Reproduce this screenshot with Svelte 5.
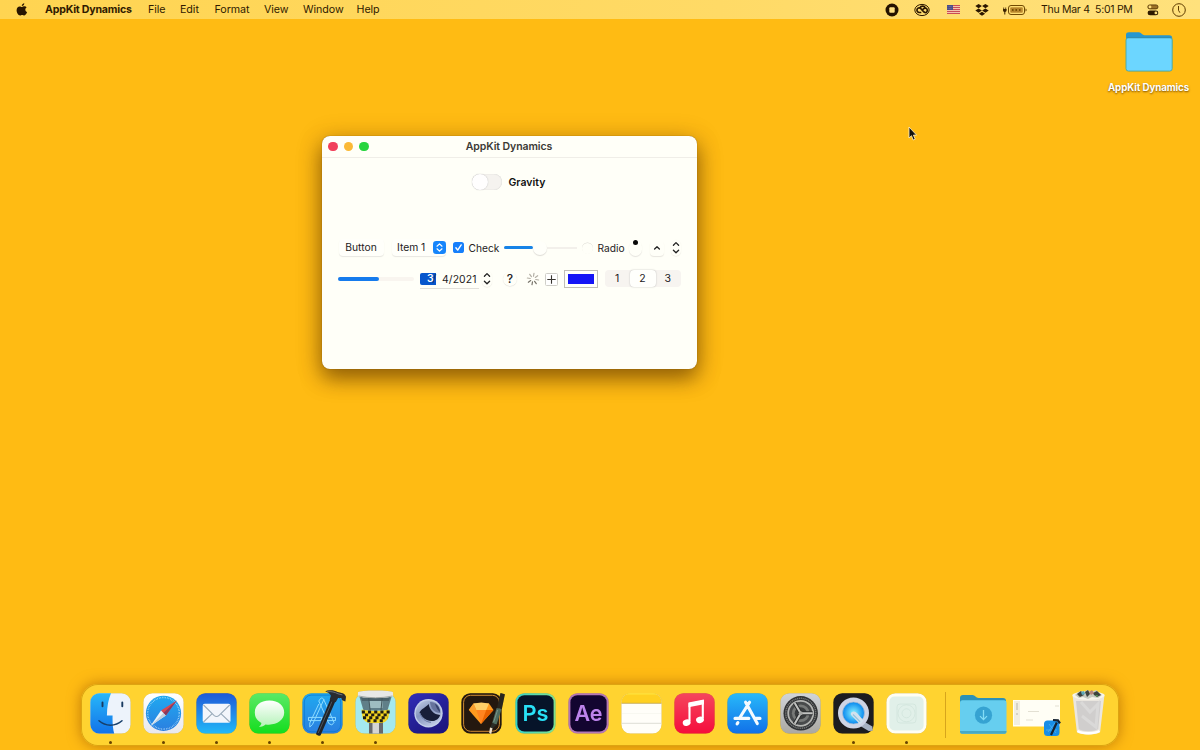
<script>
  const menus = [
    ['File', 148], ['Edit', 180], ['Format', 214.5], ['View', 264], ['Window', 303], ['Help', 356.5]
  ];
  const widths = menus.map(([, x], i) => (i < menus.length - 1 ? menus[i + 1][1] - x : 40));
  const segments = [1, 2, 3];
  const rays = [0, 45, 90, 135, 180, 225, 270, 315];
  const keys = ['finder', 'safari', 'mail', 'messages', 'xcode', 'tower', 'cinema', 'sketch', 'ps', 'ae', 'notes', 'music', 'store', 'settings', 'quicktime', 'blank'];
  const running = ['finder', 'safari', 'mail', 'messages', 'xcode', 'tower', 'quicktime', 'blank'];
</script>

{#snippet body(fill)}
  <rect x="6.4" y="9.2" width="40.2" height="40.4" rx="9" {fill} />
{/snippet}

{#snippet stepper()}
  <svg class="stepper" width="10" height="16" viewBox="0 0 10 16">
    <path d="M2.4 5.2 5 2.6l2.6 2.6M2.4 10.2 5 12.8l2.6-2.6" fill="none" stroke="#222" stroke-width="1.3" stroke-linecap="round" stroke-linejoin="round" />
  </svg>
{/snippet}

{#snippet hammer()}
  <path d="M34.700 14.500 39.700 16.500 24.600 51.200c-.8 1.200-5 0-4.500-1.600z" fill="#20242a" />
  <path d="M36 17.500 22.200 49" stroke="#59616b" stroke-width=".8" />
  <path d="M29.200 7.200c4.200-1.500 9.300-.8 12.300.8l5.200 1.200c1.200.4 2.900 2 3.300 3.500l-.7 4.900-3.400-1.500-.5-2.200-3.300.1-2.400 4.200-6-2.400 1.200-4.200c-1-2.200-3-3.300-5.700-4.400z" fill="#282c31" />
  <path d="M31 7.800c4.200-.7 8 .4 11 2l4.400 1.100" stroke="#747a80" stroke-width=".9" fill="none" />
{/snippet}

<div class="desktop">
  <header>
    <svg class="apple" width="12" height="13" viewBox="0 0 12 13"><path d="M8.300.3c.1 1.500-1.100 2.800-2.500 2.800C5.600 1.700 6.900.4 8.300.3M10.600 4.400c-2 1.200-1.500 3.800.5 4.600-.5 1.500-1.600 3.400-2.800 3.400-.8 0-1.100-.5-2.100-.5s-1.400.5-2.100.5C2.300 12.400.6 9.500.6 7.200c0-2.400 1.400-3.800 3.100-3.800.9 0 1.700.6 2.300.6.6 0 1.500-.7 2.600-.7.9 0 1.600.4 2 1.100" fill="#281500" /></svg>
    <b>AppKit Dynamics</b>
    <nav>
      {#each menus as [name], i}<span style="width:{widths[i]}px">{name}</span>{/each}
    </nav>
    <div class="status">
      <svg width="14" height="14" viewBox="0 0 14 14"><circle cx="7" cy="7" r="6.500" fill="#251300" /><rect x="4.300" y="4.300" width="5.400" height="5.400" rx="1" fill="#ffe283" /></svg>
      <svg class="cc" width="16" height="14" viewBox="0 0 16 14"><g fill="none" stroke="#2d1800"><ellipse cx="8" cy="7" rx="7.200" ry="5.600" stroke-width="1" /><path d="M7.300 9.500H5.200a2.300 2.300 0 1 1 1.200-4.300l3.600 3.900c2.500 1.400 4.400-1.500 2.700-3.400-1.200-1.200-2.800-.6-4.200 1M6 4.900c.8-2.300 4.400-2.500 5.300.1" stroke-width="1.700" /></g></svg>
      <svg class="flag" width="13" height="9" viewBox="0 0 13 9"><path fill="#f3c3ac" d="M0 0h13v9H0z" /><path stroke="#c5404c" d="M0 .5h13M0 2.500h13M0 4.500h13M0 6.500h13M0 8.500h13" stroke-width=".9" /><path fill="#4a4c88" d="M0 0h6v5H0z" /><path stroke="#a9a0b8" stroke-width=".5" stroke-dasharray=".6 .7" d="M.7 1.500h5M.7 3.500h5" /></svg>
      <svg class="dropbox" width="14" height="12" viewBox="0 0 14 12"><path fill="#2b1600" d="m3.600 0 3.300 2.100-3.300 2.100L.3 2.100zm6.800 0 3.300 2.100-3.300 2.100-3.300-2.100zM3.600 4.500l3.300 2.100-3.300 2.100L.3 6.600zm6.800 0 3.300 2.100-3.300 2.100-3.300-2.100zM7 7.700l3.100 2L7 11.700l-3.100-2z" /></svg>
      <svg class="battery" width="24" height="10" viewBox="0 0 24 10"><g fill="none" stroke="#704900"><rect x="5.500" y=".5" width="16" height="9" rx="2.500" /><rect x="7.200" y="2.300" width="12.600" height="5.400" rx="1" fill="#bd8b30" stroke="none" /><path d="m9 3.800 1.500 2.400m0-2.400L9 6.200m3.500-2.400L14 6.200m0-2.400-1.500 2.400M16 3.800l1.500 2.400m0-2.400L16 6.200" stroke-width=".9" /></g><path d="M22.500 3.500c1.500.4 1.500 2.600 0 3z" fill="#704900" /><path d="M.7 2.500v2M2.700 2.500v2" stroke="#3b2200" stroke-width=".8" /><path d="M0 4h3.600v1.300C3.600 6.400 2.700 7 2.300 7v2.500h-1V7C.7 7 0 6.400 0 5.300z" fill="#3b2200" /></svg>
      <time>Thu Mar 4&nbsp; 5:01 PM</time>
      <svg class="control" width="12" height="12" viewBox="0 0 12 12"><rect x=".8" y=".9" width="10.200" height="4" rx="2" fill="#9c7126" stroke="#4d3000" stroke-width=".8" /><circle cx="3" cy="2.900" r="1.400" fill="#ffe17d" /><rect x=".6" y="6.500" width="10.700" height="4.800" rx="2.400" fill="#2e1a00" /><circle cx="8.900" cy="8.900" r="1.400" fill="#ffe17d" /></svg>
      <svg class="clock" width="14" height="14" viewBox="0 0 14 14"><circle cx="7" cy="7" r="6.300" fill="none" stroke="#5e3b00" /><path d="M6.500 3v4.300l1.400 2.400" fill="none" stroke="#5e3b00" /></svg>
    </div>
  </header>

  <div class="shortcut">
    <svg width="50" height="42" viewBox="0 0 50 42"><path d="M2 4c0-2 1.100-2.700 3-2.700h10c2 0 3.300 3 5.500 3h24.700c2 0 3 1.200 3 3v10H2z" fill="#2797cf" /><rect x="2" y="6.500" width="46.200" height="33.600" rx="2.500" fill="#6cd6ff" stroke="#4aa79f" stroke-width=".9" /><path d="M3 6.600h44" stroke="#338eaf" stroke-width="1.100" /></svg>
    <span>AppKit Dynamics</span>
  </div>

  <svg class="cursor" width="9" height="15" viewBox="0 0 9 15"><path d="M1 1v11l2.500-2.300L5.200 14l2-.9-1.800-4H8.600z" fill="#12100c" stroke="#fff1cd" stroke-width=".8" /></svg>

  <main>
    <div class="titlebar">
      <i class="red"></i><i class="amber"></i><i class="green"></i>
      <h1>AppKit Dynamics</h1>
    </div>
    <div class="gravity"><span class="switch"><i></i></span><b>Gravity</b></div>
    <div class="row first">
      <span class="button">Button</span>
      <span class="popup">Item 1<svg width="13" height="13" viewBox="0 0 12 12"><rect width="12" height="12" rx="3" fill="#1685fb" /><path d="M3.700 4.800 6 2.600l2.300 2.200M3.700 7.200 6 9.400l2.300-2.200" fill="none" stroke="#fff" stroke-width="1.100" stroke-linecap="round" stroke-linejoin="round" /></svg></span>
      <svg class="check" width="11" height="11" viewBox="0 0 11 11"><rect width="11" height="11" rx="2.600" fill="#167ffb" /><path d="m2.900 5.800 1.800 2.300 3.500-5.200" fill="none" stroke="#fff" stroke-width="1.400" stroke-linecap="round" stroke-linejoin="round" /></svg>
      <span class="check-label">Check</span>
      <span class="slider"><b></b><i></i></span>
      <i class="radio"></i><span class="radio-label">Radio</span>
      <span class="dial"><i></i></span>
      <span class="disclosure"><svg width="8" height="6" viewBox="0 0 8 6"><path d="m1.600 4 2.400-2.300L6.400 4" fill="none" stroke="#222" stroke-width="1.300" stroke-linecap="round" stroke-linejoin="round" /></svg></span>
      {@render stepper()}
    </div>
    <div class="row second">
      <span class="progress"><i></i></span>
      <span class="date"><b>3</b><em>/</em><span>4/2021</span></span>
      {@render stepper()}
      <span class="help">?</span>
      <svg class="spinner" width="14" height="14" viewBox="0 0 14 14">
        {#each rays as angle, i}<path d="M7 1.300v2.900" stroke={i > 2 && i < 6 ? '#77736a' : '#b3afa5'} stroke-width="1.200" stroke-linecap="round" transform="rotate({angle + 10} 7 7)" />{/each}
      </svg>
      <svg class="plus" width="13" height="13" viewBox="0 0 13 13"><rect x=".5" y=".5" width="12" height="12" rx="1" fill="#fff" stroke="#d0cfc9" /><path d="M2.300 6.500h8.400M6.500 2.300v8.400" stroke="#38352f" stroke-width="1.100" /></svg>
      <span class="well"><i></i></span>
      <span class="segments">{#each segments as n}<span class:active={n === 2}>{n}</span>{/each}</span>
    </div>
  </main>

  <footer>
    <svg width="0" height="0" class="defs"><defs>
      <linearGradient id="blue" x2="0" y2="1"><stop stop-color="#28b9fa" /><stop offset="1" stop-color="#1170e8" /></linearGradient>
      <linearGradient id="sea" x2="0" y2="1"><stop stop-color="#1fa9f0" /><stop offset="1" stop-color="#2b7fe0" /></linearGradient>
      <linearGradient id="mail" x2="0" y2="1"><stop stop-color="#1e59d8" /><stop offset="1" stop-color="#22b9f8" /></linearGradient>
      <linearGradient id="green" x2="0" y2="1"><stop stop-color="#5be966" /><stop offset="1" stop-color="#14dd1e" /></linearGradient>
      <linearGradient id="bubble" x2="0" y2="1"><stop stop-color="#fff" /><stop offset="1" stop-color="#b4f3b8" /></linearGradient>
      <linearGradient id="silver" x2="0" y2="1"><stop stop-color="#d0d4d8" /><stop offset="1" stop-color="#aaa8a2" /></linearGradient>
      <linearGradient id="pink" x2="0" y2="1"><stop stop-color="#f5465d" /><stop offset="1" stop-color="#f50d3c" /></linearGradient>
      <linearGradient id="white" x2="0" y2="1"><stop stop-color="#fff" /><stop offset="1" stop-color="#e8e8ed" /></linearGradient>
      <linearGradient id="adobe"><stop stop-color="#35d3c8" /><stop offset="1" stop-color="#80e18d" /></linearGradient>
      <linearGradient id="violet" x2=".6" y2="1"><stop stop-color="#302db8" /><stop offset="1" stop-color="#1d1680" /></linearGradient>
      <linearGradient id="ball" x2=".6" y2="1"><stop stop-color="#c5d2e8" /><stop offset=".5" stop-color="#8595be" /><stop offset="1" stop-color="#bcc8e3" /></linearGradient>
      <radialGradient id="qt"><stop stop-color="#89f3ff" /><stop offset="1" stop-color="#0787ef" /></radialGradient>
      <clipPath id="tile"><rect x="6.400" y="9.200" width="40.200" height="40.400" rx="9" /></clipPath>
    </defs></svg>
    <div class="apps">
      {#each keys as key}
        <div class="app">
          <svg width="53.130" height="54" viewBox="0 0 53.130 54" class="art">
            {#if key === 'finder'}
              {@render body('#edf3fb')}
              <path clip-path="url(#tile)" d="M5 8h22.500c-3 7-4.400 14-4.600 23.500h5.700c-.2 7 .1 12.500 1.900 19.500H5z" fill="url(#blue)" />
              <path d="M18.500 18.500v3.700M38.300 18.500v3.700" stroke="#193a60" stroke-width="1.900" stroke-linecap="round" /><path d="M15 36.800c6.500 5.800 16.500 5.800 23 0" fill="none" stroke="#173f6b" stroke-width="1.500" stroke-linecap="round" />
            {:else if key === 'safari'}
              {@render body('url(#white)')}
              <circle cx="26.500" cy="29.300" r="17.600" fill="url(#sea)" /><circle cx="26.500" cy="29.300" r="15.800" fill="none" stroke="#c5e8fb" stroke-width="1.400" stroke-dasharray=".55 1.100" />
              <path d="M39.800 16.500 24 26.600l4.800 4.900z" fill="#d9484f" /><path d="M13.500 42.100 24 26.600l4.800 4.900z" fill="#edf4fa" /><path d="m39.800 16.500-11 15-2.400-2.400z" fill="#873b60" /><path d="m13.500 42.100 15.300-10.600-2.400-2.400z" fill="#bed0df" />
            {:else if key === 'mail'}
              {@render body('url(#mail)')}
              <rect x="12.700" y="19.800" width="27.800" height="19" rx="2" fill="#f3f6fb" /><path d="m13.500 21 10.500 10.300c1.600 1.500 3.500 1.500 5.100 0L39.700 21M13.500 38l8.700-8.400M39.700 38l-8.800-8.400" fill="none" stroke="#9aabba" stroke-width="1.100" />
            {:else if key === 'messages'}
              {@render body('url(#green)')}
              <path d="M26.500 16.500c-9.500 0-14.700 5.200-14.700 12.100 0 5 2.700 8.400 6.600 10.300-.2 1.800-1.200 2.800-2.500 3.900 3 0 5-1 6.600-2.400 9.700 1.500 18.700-3.400 18.700-11.800 0-7-5.600-12.100-14.700-12.100" fill="url(#bubble)" />
            {:else if key === 'xcode'}
              {@render body('url(#sea)')}<rect x="8.300" y="11.100" width="36.400" height="36.600" rx="7" fill="none" stroke="#0b78d1" stroke-width=".8" />
              <g fill="none" stroke="#8edbff" stroke-width="1"><path d="M24.500 14.500c1-.8 2.200-.6 3 .5L38 38.500l-2.200 2.500-3-1.500-10-22.500z" /><path d="M28 15.200 16.500 40.500 13.800 43v-4l9-19M12.500 33.400h13.700l-1.400 3.200H12.500zM30 33.400h9.500v3.200h-8.300z" /></g>{@render hammer()}
            {:else if key === 'tower'}
              {@render body('#a4e9ef')}
              <path clip-path="url(#tile)" d="M20 34h14v18H20z" fill="#68696c" /><path clip-path="url(#tile)" d="M23.500 37h6.500v14h-6.500z" fill="#d5d5d4" />
              <path d="M10.500 13h32l-4 13.500H14.500z" fill="#607f88" /><path d="M19.500 14h14v10h-12.500z" fill="#9ebdc1" /><path d="M12 13.500h29l-1 3.500H13z" fill="#4b626a" /><path d="M19.600 13l1.500 13M33.300 13l-1.300 13" stroke="#42565c" />
              <path d="M9 8.200c0-2.400 35-2.400 35 0l.2 3.500c-1 3-34.400 3-35.400 0z" fill="#e7e8e7" /><path d="M9.500 12q17 3.500 34 0" fill="none" stroke="#a2a8a7" />
              <path d="M12.500 25.500q14 3 28 0l-1 8q-2.500 5-7 5.500H21q-5-.5-7.500-5.500z" fill="#f3d521" />
              <g stroke="#211d12" stroke-width="2.900" stroke-dasharray="3.100 3.100"><path d="M12.800 28h28" /><path d="M16 30.900h24" /><path d="M14 33.800h25" /><path d="M18.300 36.700h17" /></g>
            {:else if key === 'cinema'}
              {@render body('url(#violet)')}
              <circle cx="26.500" cy="29.300" r="14.200" fill="#c3cfea" /><circle cx="26.500" cy="29.300" r="12.800" fill="url(#ball)" />
              <path d="M17.500 28.500c2-3.800 6-5 9.200-8.500.9 6.200 5.100 10.400 11.400 11-.8 3.600-4.400 6.200-8.600 6.100-5.600-.2-9.500-4-12-8.600" fill="#171e38" />
              <path d="M28 18c5.300-.3 10 4.500 10.200 11-5.500-.1-9.600-4.200-10.200-11" fill="#66739c" /><path d="M33 19.500c3 1.600 4.900 4.700 5.200 8.700-2.200-1.600-4-4.200-5.200-8.700" fill="#35426c" />
              <path d="M18 29c1.500 5.300 5.500 9 11 9.300" fill="none" stroke="#65749f" stroke-width="1" />
            {:else if key === 'sketch'}
              {@render body('#24180f')}<rect x="8.600" y="11.300" width="35.800" height="36" rx="7" fill="none" stroke="#d08c32" />
              <path d="M18.500 19.500h15.500l4.500 6.500-12.500 14-12.200-14z" fill="#ff9a1e" /><path d="m18.500 19.500 7.800-1 7.700 1-2.800 6.500H21.300z" fill="#ffcf68" /><path d="m13.800 26 4.700-6.500 2.800 6.500z" fill="#f99f31" /><path d="M21.300 26h9.900L26 40z" fill="#ff8420" /><path d="M31.200 26h7.300L26 40z" fill="#e96200" />
              <path d="m45.500 9 4.400 1.200-3.100 15-4.900-1z" fill="#28251e" /><path d="m41.600 24 5 1-5 15.500-4.500-1.300z" fill="#4e6c60" /><path d="m42.600 26-3.900 12" stroke="#7b9488" fill="none" /><path d="m37 39 4.500 1.500-4.300 4.500-2-1z" fill="#2b2d28" /><path d="m35 43.500 2.500.8-1.300 6-2-1.500z" fill="#eee1cc" />
            {:else if key === 'ps' || key === 'ae'}
              {@render body(key === 'ps' ? 'url(#adobe)' : '#b477b6')}
              <rect x="8.400" y="11.200" width="36.200" height="36.400" rx="7" fill={key === 'ps' ? '#061429' : '#130530'} /><text x="26.500" y="37" text-anchor="middle" font-size="22" font-weight="600" textLength={key === 'ps' ? 26 : 28} lengthAdjust="spacingAndGlyphs" fill={key === 'ps' ? '#28e0f6' : '#bd83eb'}>{key === 'ps' ? 'Ps' : 'Ae'}</text>
            {:else if key === 'notes'}
              {@render body('#fffef9')}<path clip-path="url(#tile)" d="M5 8h43v11H5z" fill="#ffd021" /><path d="M12 10h29" stroke="#ffdf35" stroke-width="1.500" /><path d="M6.500 19.300h40" stroke="#c5a74a" stroke-width=".9" /><path d="M7 29.500h39" stroke="#f5f4ed" stroke-width=".7" /><path d="M7 39.300h39" stroke="#deddd5" />
            {:else if key === 'music'}
              {@render body('url(#pink)')}
              <path d="M21.500 37V20l13.300-2.800v17" fill="none" stroke="#fff" stroke-width="2.100" /><path d="m20.500 18.500 15.400-3v4.800l-15.400 3z" fill="#fff" /><ellipse cx="18.700" cy="38.600" rx="4" ry="3.200" fill="#fff" transform="rotate(-15 18.700 38.600)" /><ellipse cx="32" cy="35.800" rx="4" ry="3.200" fill="#fff" transform="rotate(-15 32 35.800)" />
            {:else if key === 'store'}
              {@render body('url(#blue)')}
              <g stroke="#f4faff" stroke-width="3.100" stroke-linecap="round"><path d="m24.600 18.200 11.700 21.400M28.600 18.200 18.300 34.500M14 34.400h13.800M33.500 34.400H39M16.900 38.600l-.8 1.300" /></g>
            {:else if key === 'settings'}
              {@render body('url(#silver)')}
              <circle cx="26.700" cy="29.300" r="17.200" fill="#303234" /><circle cx="26.700" cy="29.300" r="15" fill="none" stroke="#747675" stroke-width="1.500" stroke-dasharray="1.200 .7" /><circle cx="26.700" cy="29.300" r="12.500" fill="#484a4b" stroke="#b4b5b2" stroke-width="1.800" /><circle cx="26.700" cy="29.300" r="8.800" fill="#777977" /><circle cx="26.700" cy="29.300" r="6" fill="#3a3c3d" /><path d="M26.700 29.300h12M26.700 29.300l-6-10.400M26.700 29.300l-6 10.400" stroke="#292b2c" stroke-width="4" /><path d="M26.700 29.300h12M26.700 29.300l-6-10.400M26.700 29.300l-6 10.400" stroke="#c2c3c1" stroke-width="2" /><circle cx="26.700" cy="29.300" r="2" fill="#a4a5a3" />
            {:else if key === 'quicktime'}
              {@render body('#1c1c20')}
              <path d="m36 37 9.400 5.500.3 4.200-4 .3-8-4.800z" fill="#a5b0c1" /><circle cx="26.500" cy="29" r="15.500" fill="#ced4e5" /><circle cx="26.500" cy="29" r="11" fill="url(#qt)" stroke="#b3bfd2" stroke-width=".7" /><path d="M24.600 28.300c2-1.700 4.200-.8 5.700 1l6.400 7.500-3.700 3.500-8.500-8.700c-1-1.100-1-2.200.1-3.300" fill="#d1e1ed" /><path d="m26 30.500 7 7.200" stroke="#8ec4de" stroke-width="1.200" />
            {:else}
              {@render body('#fffef3')}<rect x="9.400" y="12.500" width="34.200" height="34" rx="5" fill="#e1f0e9" /><g fill="none" stroke="#d0e4dc" stroke-width=".8"><circle cx="26.500" cy="29.300" r="8.500" /><circle cx="26.500" cy="29.300" r="4.500" /><rect x="17" y="20" width="19" height="19" rx="3" /></g>
            {/if}
          </svg>
          {#if running.includes(key)}<i class="dot"></i>{/if}
        </div>
      {/each}
    </div>
    <i class="separator"></i>
    <svg class="shelf" width="160" height="54" viewBox="0 0 160 54">
      <path d="M3 14c0-2 1-3 3-3h9.500c2.500 0 3.500 3 6 3H46c2 0 3 1 3 3v9H3z" fill="#2c91b6" /><rect x="3" y="16.200" width="46.500" height="33.500" rx="2.500" fill="#66ceef" /><path d="M3 47v.5c0 1.500 1 2.300 2.500 2.300H47c1.500 0 2.500-.8 2.500-2.300V47z" fill="#48a9c4" /><circle cx="26.500" cy="31.200" r="8.600" fill="#36a3d2" /><path d="M26.500 26v9.500m-3.500-3.400 3.500 3.500 3.500-3.500" fill="none" stroke="#84ddf5" stroke-width="1.300" />
      <path d="M56 16h47v26.500H56z" fill="#fffef5" /><path d="M57 17h6v24h-6z" fill="#f1eee1" /><path d="M59 19h2v7h-2zM59 29h2v2h-2z" fill="#d5d2c5" /><path d="M71 27.500h11M69 36h7M98 22h4" stroke="#e3e0d3" />
      <rect x="87" y="36.500" width="15.500" height="15.500" rx="3.500" fill="#178ee7" /><path d="m91 48 7-9M92 40l7 9M89 46h11" stroke="#55b5f0" stroke-width=".7" /><path d="m94 51 5.800-12.500M96 36l5 .4 2 3" stroke="#172331" stroke-width="2.200" fill="none" />
      <path d="m115.500 10.500 4.300 37c.4 4 23 4 23.400 0l4.300-37z" fill="#eae6df" /><path d="m119 17 2.800 28c4 3 15.500 3 19.400 0L144 17z" fill="#d0cecd" /><path d="m124 18 9 10 8-8-2 23-14-11" fill="none" stroke="#dad9d8" stroke-width="3" /><path d="M120.500 47c5 3 16.500 3 22 0" stroke="#fff" fill="none" stroke-width="2.500" />
      <ellipse cx="131.500" cy="11.500" rx="16" ry="4.200" fill="#f7f5ec" /><path d="m118 11 5-4 4 1 3-2 5 2 4-2 6 5-4 3-6-1-4 2-5-2-4 1z" fill="#c6c9c0" /><path d="m120 10 4-3 3 4-4 2zm8-2 3-2 2 4-3 3zm8 1 4-2 4 4-4 2-3-2z" fill="#3d423d" /><path d="m124 8 3-1 1 3-3 1z" fill="#5ca9b7" /><path d="m132 8 3-2 2 3-3 2z" fill="#b88579" /><path d="m138 11 3 0-1 2z" fill="#539457" />
    </svg>
  </footer>
</div>

<style>
  :global(body) { margin: 0; overflow: hidden; }
  .desktop { position: relative; width: 1200px; height: 750px; overflow: hidden; background: #ffbb13; font-family: Inter, "Liberation Sans", sans-serif; font-size: 10.700px; color: #24211d; }
  svg { display: block; flex: none; overflow: visible; }
  i { display: block; flex: none; }
  header { height: 19px; background: linear-gradient(90deg, #ffd451, #ffda66 60%, #ffe17c); display: flex; align-items: center; color: #301a00; white-space: nowrap; }
  .apple { margin: -1px 0 0 16px; }
  header > b { margin-left: 17px; width: 103px; font-size: 10.600px; line-height: 19px; height: 19px; font-weight: 700; letter-spacing: -.2px; }
  nav { display: flex; letter-spacing: -.06px; }
  .status { display: flex; align-items: center; margin-left: auto; padding-right: 14px; }
  .cc { margin-left: 15px; }
  .flag { margin-left: 17px; }
  .dropbox { margin-left: 15px; }
  .battery { margin-left: 14px; }
  time { margin-left: 14px; width: 93px; font-size: 10.500px; letter-spacing: -.28px; }
  .control { margin-left: 13px; }
  .clock { margin-left: 13px; }
  .shortcut { position: absolute; left: 1098px; top: 31px; width: 101px; display: flex; flex-direction: column; align-items: center; color: #fff; font-size: 9.700px; font-weight: 700; text-shadow: 0 1px 2px #744800; white-space: nowrap; }
  .shortcut span { margin-top: 8px; line-height: 13px; letter-spacing: -.06px; }
  .cursor { position: absolute; left: 908px; top: 126px; }
  main { position: absolute; left: 322px; top: 136px; width: 375px; height: 233px; border-radius: 8px; background: #fffff8; box-shadow: 0 0 1px #7a4c00, 0 10px 20px rgba(91, 51, 0, .55), 0 4px 26px rgba(91, 51, 0, .3); }
  .titlebar { box-sizing: border-box; height: 22px; display: flex; align-items: center; padding-left: 6px; border-bottom: 1px solid #f0eee8; }
  .titlebar i { width: 9.600px; height: 9.600px; border-radius: 50%; margin-right: 6px; }
  .red { background: #f1405b; }
  .amber { background: #fbb936; }
  .green { background: #28d53f; }
  h1 { margin: 0 0 0 91px; font-size: 10.500px; line-height: 21px; font-weight: 600; color: #3b3935; letter-spacing: -.08px; }
  .gravity { height: 18px; margin: 15px 0 0 150px; display: flex; align-items: center; font-size: 10.500px; color: #111; }
  .gravity b { margin-left: 6.500px; font-weight: 600; }
  .switch { width: 30px; height: 16px; border-radius: 8px; background: #f5f3ef; box-shadow: inset 0 0 1px #bbb; }
  .switch i { width: 16px; height: 16px; border-radius: 50%; background: #fffefe; box-shadow: 0 0 1px #aaa; }
  .row { display: flex; align-items: center; height: 20px; white-space: nowrap; }
  .first { margin: 47px 0 0 17px; }
  .second { margin: 11px 0 0 16px; }
  .button, .popup { height: 17px; line-height: 17px; border-radius: 4px; background: #fffffa; box-shadow: 0 1px 1px #e8e7e1; margin-top: -1px; }
  .button { width: 45px; text-align: center; font-size: 10.300px; text-indent: -1px; }
  .popup { width: 49px; margin-left: 8px; padding-left: 5px; display: flex; align-items: center; justify-content: space-between; font-size: 10.300px; }
  .check { margin: -1px 0 0 7px; }
  .check-label { margin-left: 4.500px; width: 35.500px; font-size: 10.200px; }
  .slider { width: 73px; height: 16px; margin-top: -1px; display: flex; align-items: center; background: linear-gradient(#f3f0eb, #f3f0eb) 0 50% / 100% 2px no-repeat; }
  .slider b { height: 3px; width: 29px; border-radius: 2px; background: #1783e7; }
  .slider i { width: 14px; height: 14px; border-radius: 50%; background: #fffffa; box-shadow: 0 1px 1px #dedcd6; }
  .radio { width: 11px; height: 11px; border-radius: 50%; margin-left: 5px; box-shadow: 0 -.5px .5px #d9d7d1; }
  .radio-label { margin-left: 4.500px; width: 31.500px; font-size: 10.200px; }
  .dial { width: 13px; height: 16px; border-radius: 7px; box-shadow: 0 1px 1px #e5e3de; }
  .dial i { width: 5px; height: 5px; border-radius: 50%; background: #080808; margin: 0 auto; }
  .disclosure { margin-left: 8px; width: 14px; height: 15px; display: grid; place-items: center; border-radius: 4px; box-shadow: 0 1px 1px #e8e6df; }
  .stepper { border-radius: 5px; box-shadow: 0 .5px 1px #e8e6de; }
  .first .stepper { margin-left: 7px; }
  .progress { width: 76px; height: 4px; border-radius: 2px; background: #f9f5ef; }
  .progress i { height: 4px; width: 41px; border-radius: 2px; background: #167bed; }
  .date { margin-left: 6px; width: 59px; height: 17px; display: flex; align-items: center; font-size: 10.400px; box-shadow: 0 1px #e2e0da; }
  .date b { box-sizing: border-box; width: 13.500px; height: 12px; line-height: 12px; background: #0756cc; color: #fff; font-weight: 600; text-align: right; border-radius: 2px 0 0 2px; }
  .date em { width: 2px; height: 12px; line-height: 12px; font-style: normal; background: #0756cc; color: #182e58; text-indent: -1px; }
  .date span { margin-left: 6.500px; letter-spacing: .1px; }
  .second .stepper { margin-left: 3px; }
  .help { margin-left: 11px; width: 14px; height: 14px; line-height: 14px; border-radius: 50%; text-align: center; font-size: 12px; font-weight: 500; box-shadow: 0 .5px 1px #dddbd6; }
  .spinner { margin-left: 9px; }
  .plus { margin-left: 5px; }
  .well { box-sizing: border-box; margin-left: 6px; width: 34px; height: 18px; border: 1px solid #c1beb8; padding: 3px; background: #fffffb; }
  .well i { height: 10px; background: #1515f6; }
  .segments { margin: -1px 0 0 7px; width: 76px; height: 17px; border-radius: 4px; background: #f7f4f0; display: flex; text-align: center; line-height: 17px; font-size: 10.500px; }
  .segments span { flex: 1; text-indent: -1px; }
  .segments .active { border-radius: 4px; background: #fffffc; box-shadow: 0 0 1.500px #aaa; }
  footer { position: absolute; left: 81px; top: 684px; box-sizing: border-box; width: 1038px; height: 62px; display: flex; padding-left: 2.500px; border-radius: 17px; background: #ffd330; box-shadow: 0 0 0 1px #dda411 inset, 0 0 14px rgba(150, 80, 0, .6); }
  .defs { position: absolute; }
  .apps { display: flex; }
  .app { width: 53.130px; display: flex; flex-direction: column; align-items: center; }
  .art { filter: drop-shadow(0 .5px .7px rgba(80, 50, 0, .35)); }
  .dot { width: 3px; height: 3px; border-radius: 50%; background: #674200; margin-top: 3px; }
  .separator { width: 1px; height: 46px; margin: 8px 0 0 11px; background: #d7a51c; }
  .shelf { margin-left: 11px; }
</style>
